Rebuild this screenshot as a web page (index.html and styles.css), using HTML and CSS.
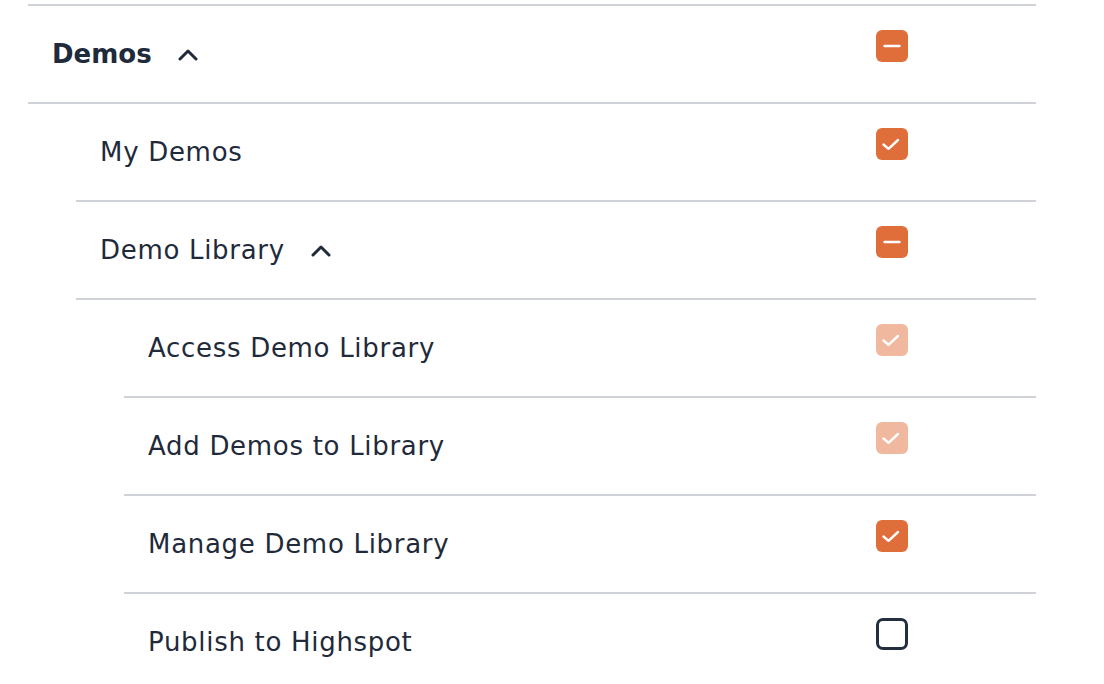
FILE: index.html
```html
<!DOCTYPE html>
<html>
<head>
<meta charset="utf-8">
<link rel="stylesheet" href="styles.css">
</head>
<body>
<div class="tree">
  <div class="node">
    <div class="row">
      <div class="label bold">Demos
        <svg class="chev" viewBox="0 0 20 12" width="20" height="12"><polyline points="2,10 10,2 18,10"/></svg>
      </div>
      <span class="box on"><svg viewBox="0 0 32 32" width="32" height="32"><line x1="8.5" y1="16" x2="23.5" y2="16"/></svg></span>
    </div>
    <div class="children">
      <div class="node">
        <div class="row">
          <div class="label">My Demos</div>
          <span class="box on"><svg viewBox="0 0 32 32" width="32" height="32"><polyline points="7.5,16.5 12.5,20.8 22,12"/></svg></span>
        </div>
      </div>
      <div class="node">
        <div class="row">
          <div class="label">Demo Library
            <svg class="chev" viewBox="0 0 20 12" width="20" height="12"><polyline points="2,10 10,2 18,10"/></svg>
          </div>
          <span class="box on"><svg viewBox="0 0 32 32" width="32" height="32"><line x1="8.5" y1="16" x2="23.5" y2="16"/></svg></span>
        </div>
        <div class="children">
          <div class="node">
            <div class="row">
              <div class="label">Access Demo Library</div>
              <span class="box faded"><svg viewBox="0 0 32 32" width="32" height="32"><polyline points="7.5,16.5 12.5,20.8 22,12"/></svg></span>
            </div>
          </div>
          <div class="node">
            <div class="row">
              <div class="label">Add Demos to Library</div>
              <span class="box faded"><svg viewBox="0 0 32 32" width="32" height="32"><polyline points="7.5,16.5 12.5,20.8 22,12"/></svg></span>
            </div>
          </div>
          <div class="node">
            <div class="row">
              <div class="label">Manage Demo Library</div>
              <span class="box on"><svg viewBox="0 0 32 32" width="32" height="32"><polyline points="7.5,16.5 12.5,20.8 22,12"/></svg></span>
            </div>
          </div>
          <div class="node">
            <div class="row">
              <div class="label">Publish to Highspot</div>
              <span class="box off"></span>
            </div>
          </div>
        </div>
      </div>
    </div>
  </div>
</div>
</body>
</html>
```
FILE: styles.css
```css
html, body {
  margin: 0;
  padding: 0;
  background: #ffffff;
}
body {
  font-family: "DejaVu Sans", sans-serif;
  color: #1f2a3b;
}
.tree {
  margin: 4px 0 0 28px;
  width: 1008px;
  border-top: 2px solid #cfd2d6;
}
.children {
  margin-left: 48px;
}
.row {
  display: flex;
  justify-content: space-between;
  align-items: flex-start;
  padding: 24px 128px 24px 24px;
  border-bottom: 2px solid #cfd2d6;
}
.label {
  display: flex;
  align-items: center;
  height: 48px;
  font-size: 26px;
  letter-spacing: 0.7px;
  white-space: nowrap;
}
.label.bold {
  font-weight: 700;
  letter-spacing: 0;
}
.chev {
  margin-left: 26px;
  margin-top: 2px;
  fill: none;
  stroke: #1f2a3b;
  stroke-width: 3;
  stroke-linecap: round;
  stroke-linejoin: round;
}
.box {
  width: 32px;
  height: 32px;
  box-sizing: border-box;
  border-radius: 6px;
  flex: none;
}
.box svg {
  display: block;
  fill: none;
  stroke: #ffffff;
  stroke-width: 2.4;
  stroke-linecap: round;
  stroke-linejoin: round;
}
.box.on {
  background: #df6e3b;
}
.box.faded {
  background: #efb89f;
}
.box.off {
  border: 3px solid #232e40;
  border-radius: 7px;
}
```
